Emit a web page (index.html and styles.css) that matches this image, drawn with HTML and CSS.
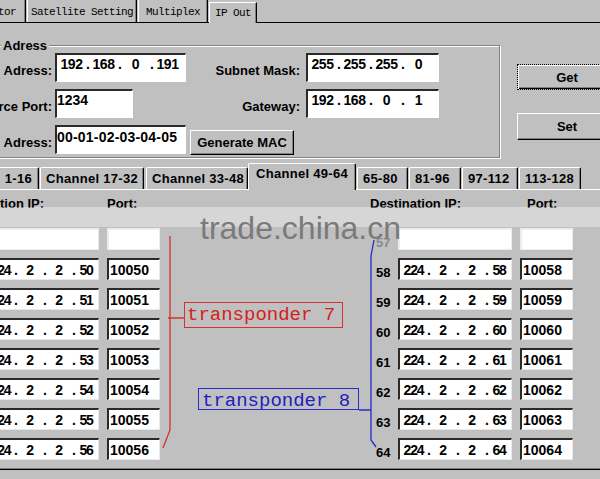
FILE: index.html
```html
<!DOCTYPE html>
<html lang="en">
  <head>
    <meta charset="UTF-8" />
    <title>IP Out</title>
    <link rel="stylesheet" href="styles.css">
  </head>
  <body>
    <div class="toptabs">
      <div class="ttab t1">tor</div>
      <div class="ttab t2">Satellite Setting</div>
      <div class="ttab t3">Multiplex</div>
      <div class="ttab t4">IP Out</div>
    </div>

    <div class="netrow">
      <fieldset class="adress">
        <legend>Adress</legend>
        <div class="frow">
          <span class="lbl">Adress:</span>
          <div class="box ip w131"><span class="f">192</span><span class="d">.</span><span class="f">168</span><span class="d">.</span><span class="f">0</span><span class="d">.</span><span class="f">191</span></div>
          <span class="lbl mask">Subnet Mask:</span>
          <div class="box ip w133"><span class="f">255</span><span class="d">.</span><span class="f">255</span><span class="d">.</span><span class="f">255</span><span class="d">.</span><span class="f">0</span></div>
        </div>
        <div class="frow">
          <span class="lbl">rce Port:</span>
          <div class="box txt w78">1234</div>
          <span class="lbl gw">Gateway:</span>
          <div class="box ip w133"><span class="f">192</span><span class="d">.</span><span class="f">168</span><span class="d">.</span><span class="f">0</span><span class="d">.</span><span class="f">1</span></div>
        </div>
        <div class="frow">
          <span class="lbl">Adress:</span>
          <div class="box txt w131 mac">00-01-02-03-04-05</div>
          <button class="btn genmac">Generate MAC</button>
        </div>
      </fieldset>
      <div class="side">
        <button class="btn get">Get</button>
        <button class="btn set">Set</button>
      </div>
    </div>

    <div class="chtabs">
      <div class="ctab c1">1-16</div>
      <div class="ctab c2">Channel 17-32</div>
      <div class="ctab c3">Channel 33-48</div>
      <div class="ctab c4 on">Channel 49-64</div>
      <div class="ctab c5">65-80</div>
      <div class="ctab c6">81-96</div>
      <div class="ctab c7">97-112</div>
      <div class="ctab c8">113-128</div>
    </div>

    <div class="chpanel">
      <div class="grp grp-l">
        <div class="hdr"><span class="h-ip">tion IP:</span><span>Port:</span></div>
        <div class="row washed"><div class="cip"><span class="f">224</span><span class="d">.</span><span class="f">2</span><span class="d">.</span><span class="f">2</span><span class="d">.</span><span class="f">49</span></div><div class="cport">10049</div></div>
        <div class="row"><div class="cip"><span class="f">224</span><span class="d">.</span><span class="f">2</span><span class="d">.</span><span class="f">2</span><span class="d">.</span><span class="f">50</span></div><div class="cport">10050</div></div>
        <div class="row"><div class="cip"><span class="f">224</span><span class="d">.</span><span class="f">2</span><span class="d">.</span><span class="f">2</span><span class="d">.</span><span class="f">51</span></div><div class="cport">10051</div></div>
        <div class="row"><div class="cip"><span class="f">224</span><span class="d">.</span><span class="f">2</span><span class="d">.</span><span class="f">2</span><span class="d">.</span><span class="f">52</span></div><div class="cport">10052</div></div>
        <div class="row"><div class="cip"><span class="f">224</span><span class="d">.</span><span class="f">2</span><span class="d">.</span><span class="f">2</span><span class="d">.</span><span class="f">53</span></div><div class="cport">10053</div></div>
        <div class="row"><div class="cip"><span class="f">224</span><span class="d">.</span><span class="f">2</span><span class="d">.</span><span class="f">2</span><span class="d">.</span><span class="f">54</span></div><div class="cport">10054</div></div>
        <div class="row"><div class="cip"><span class="f">224</span><span class="d">.</span><span class="f">2</span><span class="d">.</span><span class="f">2</span><span class="d">.</span><span class="f">55</span></div><div class="cport">10055</div></div>
        <div class="row"><div class="cip"><span class="f">224</span><span class="d">.</span><span class="f">2</span><span class="d">.</span><span class="f">2</span><span class="d">.</span><span class="f">56</span></div><div class="cport">10056</div></div>
      </div>
      <div class="grp grp-r">
        <div class="hdr"><span class="h-ip">Destination IP:</span><span>Port:</span></div>
        <div class="row washed"><span class="num">57</span><div class="cip"><span class="f">224</span><span class="d">.</span><span class="f">2</span><span class="d">.</span><span class="f">2</span><span class="d">.</span><span class="f">57</span></div><div class="cport">10057</div></div>
        <div class="row"><span class="num">58</span><div class="cip"><span class="f">224</span><span class="d">.</span><span class="f">2</span><span class="d">.</span><span class="f">2</span><span class="d">.</span><span class="f">58</span></div><div class="cport">10058</div></div>
        <div class="row"><span class="num">59</span><div class="cip"><span class="f">224</span><span class="d">.</span><span class="f">2</span><span class="d">.</span><span class="f">2</span><span class="d">.</span><span class="f">59</span></div><div class="cport">10059</div></div>
        <div class="row"><span class="num">60</span><div class="cip"><span class="f">224</span><span class="d">.</span><span class="f">2</span><span class="d">.</span><span class="f">2</span><span class="d">.</span><span class="f">60</span></div><div class="cport">10060</div></div>
        <div class="row"><span class="num">61</span><div class="cip"><span class="f">224</span><span class="d">.</span><span class="f">2</span><span class="d">.</span><span class="f">2</span><span class="d">.</span><span class="f">61</span></div><div class="cport">10061</div></div>
        <div class="row"><span class="num">62</span><div class="cip"><span class="f">224</span><span class="d">.</span><span class="f">2</span><span class="d">.</span><span class="f">2</span><span class="d">.</span><span class="f">62</span></div><div class="cport">10062</div></div>
        <div class="row"><span class="num">63</span><div class="cip"><span class="f">224</span><span class="d">.</span><span class="f">2</span><span class="d">.</span><span class="f">2</span><span class="d">.</span><span class="f">63</span></div><div class="cport">10063</div></div>
        <div class="row"><span class="num">64</span><div class="cip"><span class="f">224</span><span class="d">.</span><span class="f">2</span><span class="d">.</span><span class="f">2</span><span class="d">.</span><span class="f">64</span></div><div class="cport">10064</div></div>
      </div>
    </div>

    <!-- watermark + hand drawn notes over the dialog -->
    <div class="band"></div>
    <div class="mark">trade.china.cn</div>
    <svg class="notes" width="600" height="479" viewBox="0 0 600 479">
      <path d="M170 236V430L163 448M168 318H184" stroke="#d23232" stroke-width="1.3" fill="none" />
      <path d="M374 240L371 256V440L376 447M359 410H371" stroke="#2a2ac8" stroke-width="1.3" fill="none" />
    </svg>
    <div class="tag red">transponder 7</div>
    <div class="tag blue">transponder 8</div>
  </body>
</html>
```

FILE: styles.css
```css
* {
  margin: 0;
  padding: 0;
  box-sizing: border-box;
}
body {
  position: relative;
  width: 600px;
  height: 479px;
  overflow: hidden;
  background: #c0c0c0;
  color: #000;
  font: bold 13px "Liberation Sans", Arial, sans-serif;
}

/* top tab strip */
.toptabs {
  display: flex;
  align-items: flex-start;
  height: 23px;
  border-bottom: 1px solid #000;
}
.ttab {
  flex-shrink: 0;
  height: 22px;
  margin-right: 1px;
  font: 11px "Liberation Mono", monospace;
  line-height: 24px;
  letter-spacing: -0.6px;
  text-align: center;
  white-space: nowrap;
  overflow: hidden;
  border-left: 1px solid #fff;
  border-right: 1px solid #000;
  box-shadow: inset -1px 0 #808080;
}
.t1 {
  width: 56px;
  margin-left: -30px;
  text-align: right;
  padding-right: 9px;
}
.t2 {
  width: 110px;
}
.t3 {
  width: 70px;
}
.t4 {
  position: relative;
  width: 48px;
  height: 21px;
  margin-top: 2px;
  line-height: 20px;
  background: #c0c0c0;
  border-top: 1px solid #fff;
}

/* address group */
.netrow {
  display: flex;
  align-items: flex-start;
  padding-top: 15px;
}
.adress {
  flex-shrink: 0;
  width: 520px;
  margin-left: -20px;
  padding: 0 0 3px;
  border: 1px solid #808080;
  box-shadow: 1px 1px 0 #fff, inset 1px 1px 0 #fff;
}
.adress legend {
  margin-left: 20px;
  padding: 0 2px;
  line-height: 15px;
  background: #c0c0c0;
}
.frow {
  display: flex;
  align-items: flex-start;
  height: 29px;
  margin-bottom: 7px;
}
.frow:last-child {
  margin-bottom: 0;
}
.lbl {
  flex-shrink: 0;
  align-self: flex-end;
  width: 71px;
  margin: 0 3px 4px 0;
  line-height: 15px;
  text-align: right;
  white-space: nowrap;
}
.lbl.mask {
  width: 114px;
  margin-right: 6px;
}
.lbl.gw {
  width: 167px;
  margin-right: 6px;
}
.box {
  flex-shrink: 0;
  height: 29px;
  padding-top: 1px;
  background: #fff;
  border-style: solid;
  border-width: 2px 1px 1px 2px;
  border-color: #2a2a2a #fff #fff #2a2a2a;
  font-size: 14px;
  line-height: 16px;
  white-space: nowrap;
}
.w131 {
  width: 131px;
}
.w133 {
  width: 133px;
}
.w78 {
  width: 78px;
}
.mac {
  padding-top: 2px;
  letter-spacing: 0.2px;
}
.ip {
  display: flex;
}
.ip .f {
  width: 29px;
  text-align: center;
  letter-spacing: -0.5px;
}
.ip .d {
  width: 3px;
}

/* buttons */
.btn {
  flex-shrink: 0;
  background: #c0c0c0;
  font: bold 13px "Liberation Sans", Arial, sans-serif;
  color: #000;
  border: 1px solid;
  border-color: #fff #000 #000 #fff;
  box-shadow: inset -1px -1px #808080;
}
.genmac {
  width: 104px;
  height: 25px;
  margin: 5px 0 0 4px;
}
.side {
  flex-shrink: 0;
  display: flex;
  flex-direction: column;
  gap: 23px;
  margin-left: 17px;
  padding-top: 26px;
}
.get {
  width: 100px;
  height: 26px;
  border: 1px dotted #000;
  box-shadow: inset 1px 1px #fff, inset -1px -1px #000, inset -2px -2px #808080;
}
.set {
  width: 100px;
  height: 27px;
}

/* channel tabs */
.chtabs {
  display: flex;
  align-items: flex-end;
  height: 27px;
  margin: 5px 0 0 -25px;
  border-bottom: 1px solid #fff;
}
.ctab {
  flex-shrink: 0;
  height: 22px;
  margin-right: 1px;
  padding-left: 5px;
  line-height: 21px;
  letter-spacing: 0.3px;
  white-space: nowrap;
  overflow: hidden;
  border: 1px solid #fff;
  border-bottom: 0;
  border-right-color: #000;
  border-radius: 2px 2px 0 0;
  box-shadow: inset -1px 0 #808080;
}
.ctab.on {
  position: relative;
  height: 27px;
  margin-bottom: -1px;
  padding-left: 7px;
  line-height: 20px;
  background: #c0c0c0;
}
.c1 {
  width: 64px;
  padding-right: 6px;
  text-align: right;
}
.c2 {
  width: 104px;
  margin-right: 2px;
}
.c3 {
  width: 102px;
  margin-right: 0;
}
.c4 {
  width: 108px;
}
.c5 {
  width: 51px;
}
.c6 {
  width: 52px;
}
.c7 {
  width: 56px;
}
.c8 {
  width: 62px;
}

/* channel panel */
.chpanel {
  display: flex;
  gap: 216px;
  margin-left: -15px;
  padding: 6px 0 9px;
  border-bottom: 1px solid #000;
  box-shadow: inset 0 -1px #808080;
}
.grp {
  flex-shrink: 0;
  display: flex;
  flex-direction: column;
  gap: 8px;
}
.hdr {
  display: flex;
  height: 15px;
  margin-bottom: 9px;
  line-height: 15px;
  white-space: nowrap;
}
.grp-l .hdr {
  margin-left: 15px;
}
.grp-l .h-ip {
  width: 107px;
}
.grp-r .hdr {
  margin-left: -6px;
}
.grp-r .h-ip {
  width: 157px;
}
.row {
  display: flex;
  align-items: flex-end;
  height: 22px;
}
.num {
  flex-shrink: 0;
  width: 16px;
  margin-right: 6px;
  line-height: 14px;
}
.cip,
.cport {
  flex-shrink: 0;
  display: flex;
  align-items: center;
  height: 22px;
  background: #fff;
  border-style: solid;
  border-width: 2px 1px 1px 2px;
  border-color: #2a2a2a #e8e8e8 #e8e8e8 #2a2a2a;
  font-size: 14px;
  white-space: nowrap;
}
.cip {
  width: 114px;
}
.cip .f {
  width: 27px;
  text-align: center;
  letter-spacing: -1.2px;
}
.cip .f:last-child {
  flex: 1;
}
.cip .d {
  width: 2px;
}
.cport {
  width: 53px;
  margin-left: 8px;
  padding-left: 1px;
}
.washed .cip,
.washed .cport {
  color: transparent;
  border-color: #ececec;
}
.washed .num {
  color: #8a8a8a;
}

/* watermark and notes */
.band {
  position: absolute;
  left: 0;
  top: 207px;
  width: 600px;
  height: 20px;
  background: rgba(255, 255, 255, 0.35);
}
.mark {
  position: absolute;
  left: 200px;
  top: 212px;
  font: 32px "Liberation Sans", Arial, sans-serif;
  line-height: 32px;
  color: #7a7a7a;
}
.notes {
  position: absolute;
  left: 0;
  top: 0;
}
.tag {
  position: absolute;
  font: 19px "Liberation Mono", monospace;
  white-space: nowrap;
}
.tag.red {
  left: 184px;
  top: 302px;
  width: 159px;
  height: 26px;
  padding-left: 2px;
  line-height: 24px;
  color: #d42020;
  border: 1px solid #d23232;
}
.tag.blue {
  left: 198px;
  top: 388px;
  width: 161px;
  height: 22px;
  padding: 2px 0 0 3px;
  line-height: 20px;
  color: #2020c0;
  border: 1px solid #2a2ac8;
}
```
